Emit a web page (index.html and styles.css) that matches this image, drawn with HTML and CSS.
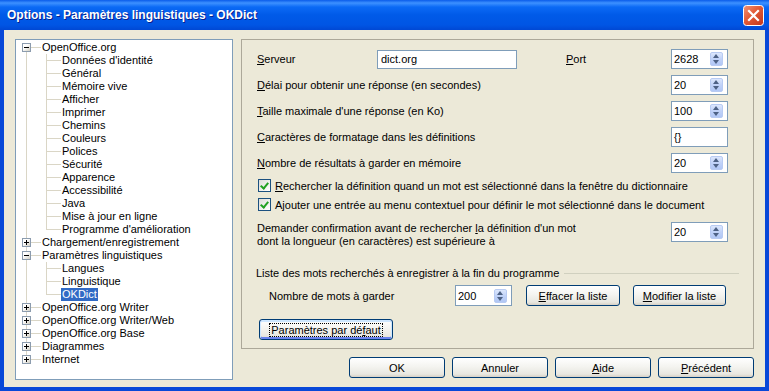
FILE: index.html
```html
<!DOCTYPE html>
<html lang="fr">
<head>
    <meta charset="UTF-8">
    <title>Options - Paramètres linguistiques - OKDict</title>
    <link rel="stylesheet" href="styles.css">
</head>
<body>
    <div class="window">
        <div class="titlebar">
            <span class="title">Options - Paramètres linguistiques - OKDict</span>
            <span class="close">
                <svg width="21" height="21" viewBox="0 0 21 21">
                    <defs>
                        <linearGradient id="cg" x1="0" y1="0" x2="1" y2="1">
                            <stop offset="0" stop-color="#F29478"/>
                            <stop offset="0.45" stop-color="#E25A36"/>
                            <stop offset="1" stop-color="#C2351A"/>
                        </linearGradient>
                    </defs>
                    <rect x="0.5" y="0.5" width="20" height="20" rx="3" fill="url(#cg)" stroke="#fff"/>
                    <path d="M6 6 L15 15 M15 6 L6 15" stroke="#fff" stroke-width="2.2" stroke-linecap="square"/>
                </svg>
            </span>
        </div>

        <div class="client">
            <div class="tree-panel">
                <ul class="tree">
                    <li class="open"><span class="toggle"></span><span class="label">OpenOffice.org</span>
                        <ul>
                            <li><span class="label">Données d'identité</span></li>
                            <li><span class="label">Général</span></li>
                            <li><span class="label">Mémoire vive</span></li>
                            <li><span class="label">Afficher</span></li>
                            <li><span class="label">Imprimer</span></li>
                            <li><span class="label">Chemins</span></li>
                            <li><span class="label">Couleurs</span></li>
                            <li><span class="label">Polices</span></li>
                            <li><span class="label">Sécurité</span></li>
                            <li><span class="label">Apparence</span></li>
                            <li><span class="label">Accessibilité</span></li>
                            <li><span class="label">Java</span></li>
                            <li><span class="label">Mise à jour en ligne</span></li>
                            <li><span class="label">Programme d'amélioration</span></li>
                        </ul>
                    </li>
                    <li><span class="toggle"></span><span class="label">Chargement/enregistrement</span></li>
                    <li class="open"><span class="toggle"></span><span class="label">Paramètres linguistiques</span>
                        <ul>
                            <li><span class="label">Langues</span></li>
                            <li><span class="label">Linguistique</span></li>
                            <li><span class="label selected">OKDict</span></li>
                        </ul>
                    </li>
                    <li><span class="toggle"></span><span class="label">OpenOffice.org Writer</span></li>
                    <li><span class="toggle"></span><span class="label">OpenOffice.org Writer/Web</span></li>
                    <li><span class="toggle"></span><span class="label">OpenOffice.org Base</span></li>
                    <li><span class="toggle"></span><span class="label">Diagrammes</span></li>
                    <li><span class="toggle"></span><span class="label">Internet</span></li>
                </ul>
            </div>

            <div class="settings">
                <div class="group">
                    <div class="field">
                        <span class="name"><u>S</u>erveur</span>
                        <span class="textbox server">dict.org</span>
                        <span class="port"><u>P</u>ort</span>
                        <span class="spin">2628<span class="spin-btn"></span></span>
                    </div>
                    <div class="field">
                        <span><u>D</u>élai pour obtenir une réponse (en secondes)</span>
                        <span class="spin">20<span class="spin-btn"></span></span>
                    </div>
                    <div class="field">
                        <span><u>T</u>aille maximale d'une réponse (en Ko)</span>
                        <span class="spin">100<span class="spin-btn"></span></span>
                    </div>
                    <div class="field">
                        <span><u>C</u>aractères de formatage dans les définitions</span>
                        <span class="spin">{}</span>
                    </div>
                    <div class="field">
                        <span><u>N</u>ombre de résultats à garder en mémoire</span>
                        <span class="spin">20<span class="spin-btn"></span></span>
                    </div>

                    <div class="check">
                        <span class="box"></span>
                        <span><u>R</u>echercher la définition quand un mot est sélectionné dans la fenêtre du dictionnaire</span>
                    </div>
                    <div class="check">
                        <span class="box"></span>
                        <span>A<u>j</u>outer une entrée au menu contextuel pour définir le mot sélectionné dans le document</span>
                    </div>

                    <div class="field tall">
                        <span>Demander confirmation avant de rechercher <u>l</u>a définition d'un mot<br>dont la longueur (en caractères) est supérieure à</span>
                        <span class="spin">20<span class="spin-btn"></span></span>
                    </div>

                    <div class="sep-title">Liste des mots recherchés à enregistrer à la fin du programme</div>
                    <div class="history">
                        <span class="history-name">Nombre de mots à <u>g</u>arder</span>
                        <span class="spin">200<span class="spin-btn"></span></span>
                        <button class="btn clear"><span><u>E</u>ffacer la liste</span></button>
                        <button class="btn edit"><span><u>M</u>odifier la liste</span></button>
                    </div>

                    <button class="btn default"><span class="focus">Paramètres par dé<u>f</u>aut</span></button>
                </div>

                <div class="actions">
                    <button class="btn">OK</button>
                    <button class="btn">Annuler</button>
                    <button class="btn"><span><u>A</u>ide</span></button>
                    <button class="btn"><span><u>P</u>récédent</span></button>
                </div>
            </div>
        </div>
    </div>
</body>
</html>
```

FILE: styles.css
```css
* {
    box-sizing: border-box;
}
body {
    margin: 0;
    background: #fff;
    font-family: "Liberation Sans", Arial, sans-serif;
    font-size: 11px;
    color: #000;
}
.window {
    width: 769px;
    height: 391px;
    display: flex;
    flex-direction: column;
    background: #0848D8;
}
.titlebar {
    height: 30px;
    display: flex;
    align-items: center;
    padding: 0 5px 0 7px;
    background: linear-gradient(180deg, #0A5CEA 0, #3D91FF 3px, #0B6AF5 7px, #005AE8 15px, #0055E4 25px, #0048D4 30px);
}
.title {
    flex: 1;
    color: #fff;
    font-weight: bold;
    font-size: 12px;
    text-shadow: 1px 1px 0 #0A1E8C;
}
.close {
    width: 21px;
    height: 21px;
}
.close svg {
    display: block;
}
.client {
    flex: 1;
    margin: 0 4px 4px;
    background: #ECE9D8;
    display: flex;
    gap: 8px;
    padding: 9px 11px 0;
}

/* tree */
.tree-panel {
    width: 218px;
    height: 341px;
    background: #fff;
    border: 1px solid #7F9DB9;
    padding-top: 1px;
}
.tree, .tree ul {
    list-style: none;
    margin: 0;
    padding: 0;
}
.tree li {
    position: relative;
    line-height: 13px;
    white-space: nowrap;
}
.tree > li {
    padding-left: 25px;
}
.tree > li::before {
    content: "";
    position: absolute;
    left: 10px;
    top: 0;
    bottom: 0;
    border-left: 1px solid #DAD6C6;
}
.tree > li:first-child::before {
    top: 6px;
}
.tree > li:last-child::before {
    bottom: auto;
    height: 7px;
}
.tree > li::after {
    content: "";
    position: absolute;
    left: 11px;
    top: 6px;
    width: 14px;
    border-top: 1px solid #DAD6C6;
}
.tree ul li {
    margin-left: -25px;
    padding-left: 45px;
}
.tree ul li::before {
    content: "";
    position: absolute;
    left: 30px;
    top: 0;
    bottom: 0;
    border-left: 1px solid #DAD6C6;
}
.tree ul li:last-child::before {
    bottom: auto;
    height: 7px;
}
.tree ul li::after {
    content: "";
    position: absolute;
    left: 31px;
    top: 6px;
    width: 14px;
    border-top: 1px solid #DAD6C6;
}
.toggle {
    position: absolute;
    z-index: 1;
    left: 6px;
    top: 2px;
    width: 9px;
    height: 9px;
    border: 1px solid #8C9CAE;
    background: linear-gradient(135deg, #fff 35%, #D2CFC3);
}
.toggle::before {
    content: "";
    position: absolute;
    left: 1px;
    top: 3px;
    width: 5px;
    border-top: 1px solid #000;
}
.toggle::after {
    content: "";
    position: absolute;
    left: 3px;
    top: 1px;
    height: 5px;
    border-left: 1px solid #000;
}
.open > .toggle::after {
    display: none;
}
.label {
    display: inline-block;
    padding: 0 1px;
}
.selected {
    background: #316AC5;
    color: #fff;
}

/* settings */
.settings {
    width: 513px;
    display: flex;
    flex-direction: column;
}
.group {
    height: 310px;
    border: 1px solid #ACA899;
    padding: 9px 14px 0 15px;
}
.field {
    display: flex;
    align-items: center;
    height: 20px;
    margin-bottom: 6px;
}
.name {
    width: 120px;
}
.textbox {
    height: 19px;
    border: 1px solid #7F9DB9;
    background: #fff;
    display: flex;
    align-items: center;
    padding: 0 3px;
}
.server {
    width: 140px;
}
.port {
    margin-left: 49px;
}
.spin {
    width: 57px;
    height: 20px;
    border: 1px solid #7F9DB9;
    background: #fff;
    display: flex;
    align-items: center;
    justify-content: space-between;
    padding: 0 4px 0 2px;
    margin-left: auto;
    margin-right: 11px;
}
.spin-btn {
    position: relative;
    width: 13px;
    height: 14px;
    border: 1px solid #B8CBF3;
    border-radius: 2px;
    background: linear-gradient(180deg, #DCE7FD, #C0D2F8 50%, #B1C7F5);
}
.spin-btn::before,
.spin-btn::after {
    content: "";
    position: absolute;
    left: 2px;
    border-left: 3.5px solid transparent;
    border-right: 3.5px solid transparent;
}
.spin-btn::before {
    top: 1px;
    border-bottom: 4px solid #4D6185;
}
.spin-btn::after {
    bottom: 1px;
    border-top: 4px solid #4D6185;
}
.check {
    display: flex;
    align-items: center;
    gap: 4px;
    height: 13px;
    margin-bottom: 6px;
    padding-left: 1px;
}
.check + .check {
    margin-bottom: 11px;
}
.box {
    position: relative;
    width: 13px;
    height: 13px;
    border: 1px solid #1C5180;
    background: linear-gradient(135deg, #DCDCD7, #fff);
}
.box::after {
    content: "";
    position: absolute;
    left: 3px;
    top: 1px;
    width: 3px;
    height: 6px;
    border: solid #21A121;
    border-width: 0 2px 2px 0;
    transform: rotate(40deg);
}
.tall {
    height: 26px;
    align-items: flex-start;
    line-height: 13px;
    margin-bottom: 0;
}
.sep-title {
    display: flex;
    align-items: center;
    gap: 5px;
    margin: 19px 0 0 -1px;
    line-height: 13px;
}
.sep-title::after {
    content: "";
    flex: 1;
    border-top: 1px solid #D0D0BF;
}
.history {
    display: flex;
    align-items: center;
    height: 21px;
    margin-top: 5px;
    padding-left: 12px;
}
.history-name {
    width: 186px;
}
.history .spin {
    margin: 0;
    height: 21px;
}
.btn {
    height: 21px;
    padding: 0;
    border: 1px solid #003C74;
    border-radius: 3px;
    background: linear-gradient(180deg, #fff, #F4F4F0 45%, #E8E7E0 85%, #D6D0C5);
    font: inherit;
    color: #000;
    display: flex;
    align-items: center;
    justify-content: center;
}
.clear {
    width: 94px;
    margin-left: 14px;
}
.edit {
    width: 93px;
    margin-left: 13px;
}
.default {
    width: 134px;
    margin: 13px 0 0 2px;
    box-shadow: inset 0 1px 0 1px #CEE7FF, inset 0 -1px 0 1px #6982EE;
}
.focus {
    outline: 1px dotted #000;
    padding: 0 1px;
    line-height: 12px;
}
.actions {
    display: flex;
    justify-content: flex-end;
    gap: 7px;
    margin-top: 8px;
}
.actions .btn {
    width: 96px;
}
```
